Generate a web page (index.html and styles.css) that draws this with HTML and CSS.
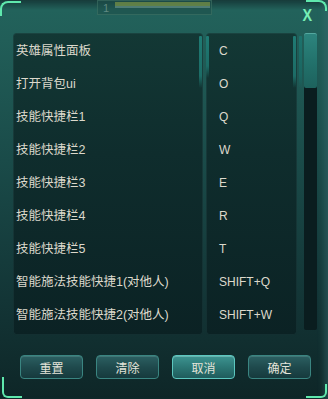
FILE: index.html
```html
<!DOCTYPE html>
<html>

<head>
    <meta charset="UTF-8">
    <title>快捷键设置</title>
    <link rel="stylesheet" href="styles.css">
</head>

<body>
    <div class="window">
        <div class="xp-bar">
            <span class="xp-level">1</span>
            <span class="xp-fill"></span>
        </div>
        <div class="corner corner-tl"></div>
        <div class="corner corner-tr"></div>
        <div class="corner corner-bl"></div>
        <div class="corner corner-br"></div>

        <div class="head">
            <button class="close-btn">X</button>
        </div>

        <div class="list">
            <div class="col col-name">
                <div class="row">英雄属性面板</div>
                <div class="row">打开背包ui</div>
                <div class="row">技能快捷栏1</div>
                <div class="row">技能快捷栏2</div>
                <div class="row">技能快捷栏3</div>
                <div class="row">技能快捷栏4</div>
                <div class="row">技能快捷栏5</div>
                <div class="row">智能施法技能快捷1(对他人)</div>
                <div class="row">智能施法技能快捷2(对他人)</div>
            </div>
            <div class="col col-key">
                <div class="row">C</div>
                <div class="row">O</div>
                <div class="row">Q</div>
                <div class="row">W</div>
                <div class="row">E</div>
                <div class="row">R</div>
                <div class="row">T</div>
                <div class="row">SHIFT+Q</div>
                <div class="row">SHIFT+W</div>
            </div>
            <div class="side-bar"></div>
            <div class="scroll">
                <div class="scroll-thumb"></div>
            </div>
        </div>

        <div class="actions">
            <button class="btn">重置</button>
            <button class="btn">清除</button>
            <button class="btn btn-active">取消</button>
            <button class="btn">确定</button>
        </div>
    </div>
</body>

</html>
```

FILE: styles.css
```css
* {
    box-sizing: border-box;
}

body {
    margin: 0;
    width: 328px;
    height: 399px;
    overflow: hidden;
    background-color: #0f2628;
    color: #dcd9cc;
    font-family: "Liberation Sans", "Noto Sans CJK SC", sans-serif;
}

.window {
    position: relative;
    width: 328px;
    height: 399px;
    display: flex;
    flex-direction: column;
    background: linear-gradient(to bottom, #163a39 0, #22625b 10px, #215e58 40px, #1a4b49 160px, #133536 300px, #0e2627 399px);
    box-shadow: inset -8px 0 6px -4px rgba(60, 110, 115, 0.45);
}

/* game hud behind the panel */
.xp-bar {
    position: absolute;
    left: 97px;
    top: 0;
    width: 115px;
    height: 15px;
    background-color: rgba(30, 80, 75, 0.6);
    border: 1px solid rgba(90, 140, 120, 0.35);
}

.xp-level {
    position: absolute;
    left: 5px;
    top: 1px;
    font-size: 11px;
    color: rgba(160, 190, 180, 0.5);
}

.xp-fill {
    position: absolute;
    left: 17px;
    top: 1px;
    right: 1px;
    height: 6px;
    background-color: rgba(140, 160, 70, 0.6);
    border-bottom: 2px solid rgba(60, 120, 160, 0.5);
}

.corner {
    position: absolute;
    border: 0 solid #5fe8ad;
}

.corner-tl {
    left: 0;
    top: 1px;
    width: 21px;
    height: 15px;
    border-left-width: 2px;
    border-top-width: 2px;
    border-top-left-radius: 8px;
}

.corner-tr {
    right: 1px;
    top: 0;
    width: 21px;
    height: 11px;
    border-right-width: 2px;
    border-top-width: 2px;
    border-top-right-radius: 8px;
}

.corner-bl {
    left: 2px;
    bottom: 1px;
    width: 20px;
    height: 21px;
    border-left-width: 2px;
    border-bottom-width: 2px;
    border-bottom-left-radius: 6px;
}

.corner-br {
    right: 1px;
    bottom: 1px;
    width: 21px;
    height: 14px;
    border-right-width: 2px;
    border-bottom-width: 2px;
    border-bottom-right-radius: 6px;
}

.head {
    height: 33px;
    display: flex;
    justify-content: flex-end;
    align-items: flex-start;
    padding: 8px 15px 0 0;
}

.close-btn {
    background: none;
    border: none;
    padding: 0;
    color: #77efb6;
    font-family: "Liberation Sans", sans-serif;
    font-weight: bold;
    font-size: 16px;
    line-height: 16px;
    transform: scaleX(0.9);
    cursor: pointer;
}

.list {
    display: flex;
    height: 302px;
    padding-left: 13px;
}

.col {
    position: relative;
    padding-top: 2px;
    border-radius: 4px;
    background: linear-gradient(to bottom, #133835 0, #0f2d2d 120px, #0b2224 302px);
    box-shadow: inset 0 0 0 1px rgba(80, 150, 145, 0.12);
}

.col::after {
    content: "";
    position: absolute;
    top: 3px;
    right: 1px;
    width: 3px;
    height: 52px;
    border-radius: 1px;
    background: linear-gradient(to bottom, #1f7b74 0, #1c6c66 40px, rgba(20, 70, 68, 0) 52px);
}

.col-name {
    width: 190px;
    padding-left: 3px;
}

.col-key {
    width: 91px;
    margin-left: 3px;
    padding-left: 13px;
}

.col-key::before {
    content: "";
    position: absolute;
    top: 3px;
    left: 0;
    width: 3px;
    height: 42px;
    border-radius: 1px;
    background: linear-gradient(to bottom, #1f7b74 0, #1c6c66 30px, rgba(20, 70, 68, 0) 42px);
}

.row {
    height: 33px;
    line-height: 33px;
    font-size: 12.5px;
    white-space: nowrap;
}

.col-key .row {
    font-size: 12px;
}

.side-bar {
    width: 3px;
    height: 52px;
    margin: 3px 0 0 2px;
    border-radius: 1px;
    background: linear-gradient(to bottom, #1d736d 0, #1a6560 40px, rgba(20, 70, 68, 0) 52px);
}

.scroll {
    width: 13px;
    height: 297px;
    margin-left: 2px;
    border-radius: 2px;
    background-color: #0a1d1f;
}

.scroll-thumb {
    height: 55px;
    border-radius: 2px;
    background: linear-gradient(to bottom, #2d857e 0, #22716b 30px, #1d625d 55px);
    box-shadow: inset 0 1px 0 rgba(140, 220, 210, 0.4);
}

.actions {
    display: flex;
    gap: 13px;
    padding: 20px 0 0 20px;
}

.btn {
    width: 63px;
    height: 24px;
    padding: 0;
    border-radius: 4px;
    border: 1px solid #3a8581;
    background: linear-gradient(to bottom, #2c6062 0, #1f4a4d 50%, #163a3d 100%);
    box-shadow: inset 0 1px 0 rgba(150, 210, 205, 0.2);
    color: #e4e4da;
    font-family: "Noto Sans CJK SC", sans-serif;
    font-size: 12px;
    cursor: pointer;
}

.btn-active {
    border-color: #5cc7bf;
    background: linear-gradient(to bottom, #3d9491 0, #2c7775 50%, #1f5c5c 100%);
    box-shadow: inset 0 1px 0 rgba(180, 240, 235, 0.35);
}
```
